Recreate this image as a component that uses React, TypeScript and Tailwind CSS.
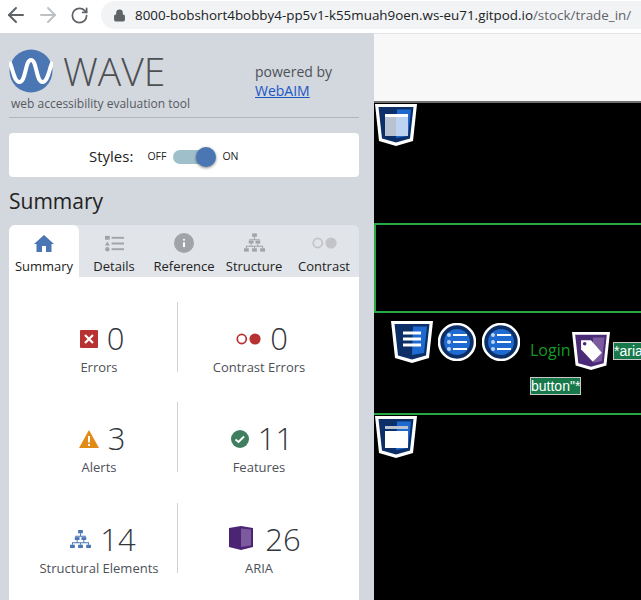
import { ReactNode } from 'react'
import { ArrowLeft, ArrowRight, RotateCw, Lock, Info } from 'lucide-react'

function TreeIcon({ color, className }: { color: string; className?: string }) {
  return (
    <svg viewBox="0 0 22 20" className={className} fill={color}>
      <rect x="8.500" y="0" width="5" height="3.500" />
      <rect x="5" y="7.500" width="5" height="3" />
      <rect x="12" y="7.500" width="5" height="3" />
      <rect x="0" y="15.500" width="5" height="3.500" />
      <rect x="8.500" y="15.500" width="5" height="3.500" />
      <rect x="17" y="15.500" width="5" height="3.500" />
      <path d="M10.500 3.500h1V6h5v1.500h-1V7H6.500v.5h-1V6h5zM7 10.500h1V13h6v-2.500h1V13h5v2.500h-1V14h-7.500v1.500h-1V14H3v1.500H2V13h5z" />
    </svg>
  )
}

function ContrastIcon({ color, className }: { color: string; className?: string }) {
  return (
    <svg viewBox="0 0 26 12" className={className}>
      <circle cx="6" cy="6" r="4.700" fill="none" stroke={color} strokeWidth="1.800" />
      <circle cx="19.800" cy="6" r="5.800" fill={color} />
    </svg>
  )
}

function Shield({ children, light = false, className }: { children: ReactNode; light?: boolean; className?: string }) {
  return (
    <svg viewBox="0 0 42 42" className={className}>
      <path d="M0 0H42L38 37L21 42L4 37Z" fill="#fff" />
      <path d="M3.500 3H38.500L35 34.500L21 38.500L7 34.500Z" fill={light ? '#4b2a78' : '#0b2f66'} />
      {children}
    </svg>
  )
}

function Tab({ icon, label, active = false }: { icon: ReactNode; label: string; active?: boolean }) {
  return (
    <div className={`w-[70px] h-[52px] flex flex-col items-center pt-[6px] ${active ? 'bg-white rounded-t-md' : ''}`}>
      <div className="h-[24px] flex items-center justify-center">{icon}</div>
      <span className="text-[13px] leading-[18px] mt-[2px] text-[#222] whitespace-nowrap">{label}</span>
    </div>
  )
}

function Stat({ icon, value, label, gap = 'gap-[9px]', shift = 'ml-[6px]' }: { icon: ReactNode; value: string; label: string; gap?: string; shift?: string }) {
  return (
    <div className="flex flex-col items-center h-[74px]">
      <div className={`h-[37px] flex items-center ${gap} ${shift}`}>
        {icon}
        <span className="text-[31px] leading-[37px] font-light text-[#33373d]">{value}</span>
      </div>
      <span className="text-[13px] leading-[18px] mt-[1px] text-[#4d5158] whitespace-nowrap">{label}</span>
    </div>
  )
}

function Row({ left, right, top }: { left: ReactNode; right: ReactNode; top: string }) {
  return (
    <div className={`grid grid-cols-[169px_1fr] grid-rows-[70px] ${top}`}>
      <div className="border-r border-[#cfd1d4] flex justify-center pl-[12px] pt-[18px]">{left}</div>
      <div className="flex justify-center pr-[19px] pt-[18px]">{right}</div>
    </div>
  )
}

export default function App() {
  return (
    <div className="w-[641px] h-[600px] overflow-hidden bg-white flex flex-col font-['Open_Sans',sans-serif]">
      {/* Barra del navegador */}
      <div className="h-[33px] shrink-0 flex items-center pb-[3px] bg-white">
        <ArrowLeft size={24} strokeWidth={2} className="ml-[4px] text-[#5f6368]" />
        <ArrowRight size={24} strokeWidth={2} className="ml-[8px] text-[#bdc1c6]" />
        <RotateCw size={19} strokeWidth={2.200} className="ml-[10px] text-[#5f6368]" />
        <div className="ml-[12px] flex-1 h-[28px] bg-[#f1f3f4] rounded-l-full flex items-center pl-[12px] overflow-hidden">
          <Lock size={13} fill="#5f6368" className="text-[#5f6368] shrink-0" />
          <span className="ml-[9px] text-[13.400px] whitespace-nowrap text-[#5f6368]">
            <span className="text-[#202124]">8000-bobshort4bobby4-pp5v1-k55muah9oen.ws-eu71.gitpod.io</span>/stock/trade_in/
          </span>
        </div>
      </div>

      <div className="flex-1 flex min-h-0">
        {/* Panel WAVE */}
        <div className="w-[374px] shrink-0 bg-[#d3d7de] pl-[9px] pr-[15px]">
          <div className="h-[85px] border-b border-[#b3b6bc] flex">
            <div className="w-[246px] pt-[16px]">
              <div className="flex items-center h-[43px]">
                <svg viewBox="0 0 44 44" className="w-[44px] h-[44px] shrink-0">
                  <circle cx="22" cy="22" r="21.500" fill="#4a77b4" />
                  <path d="M0.500 13C4 20 5 33 10.500 33C17 33 16 11 22 11C28 11 27 33 33.500 33C39 33 40 20 43.500 13" fill="none" stroke="#fff" strokeWidth="4" />
                </svg>
                <span className="ml-[10px] text-[39px] leading-[43px] font-light text-[#4d4f52]">WAVE</span>
              </div>
              <div className="ml-[2px] mt-[3px] text-[12px] leading-[17px] text-[#555a60] whitespace-nowrap">web accessibility evaluation tool</div>
            </div>
            <div className="pt-[29px] text-[14px] leading-[19px] text-[#4d5158]">
              <div>powered by</div>
              <div className="text-[#1a56c4] underline">WebAIM</div>
            </div>
          </div>

          <div className="mt-[15px] h-[44px] bg-white rounded-[4px] flex items-center pl-[80px] pt-[3px] text-[#222]">
            <span className="text-[15px]">Styles:</span>
            <span className="ml-[14px] text-[10.500px]">OFF</span>
            <div className="ml-[7px] relative w-[36px] h-[14px] rounded-full bg-[#9fc0cb]">
              <div className="absolute right-[-7px] top-[-3px] w-[20px] h-[20px] rounded-full bg-[#4a77b4] shadow-[0_1px_3px_rgba(0,0,0,0.500)]" />
            </div>
            <span className="ml-[13px] text-[10.500px]">ON</span>
          </div>

          <h2 className="mt-[11px] text-[21px] leading-[27px] text-[#222]">Summary</h2>

          <div className="mt-[10px] w-[350px]">
            <div className="flex bg-[#e1e4e8] rounded-t-md">
              <Tab active label="Summary" icon={
                <svg viewBox="0 0 20 17" className="w-[20px] h-[17px]" fill="#4a77b4">
                  <path d="M10 0L20 9H17.500V17H12V11H8V17H2.500V9H0Z" />
                </svg>
              } />
              <Tab label="Details" icon={
                <svg viewBox="0 0 20 17" className="w-[19px] h-[17px]" fill="#a0a3a7">
                  <rect x="0" y="0.500" width="5" height="4" /><rect x="7" y="1.500" width="13" height="2" />
                  <path d="M2.500 6.500L5 10.500H0Z" /><rect x="7" y="7.500" width="13" height="2" />
                  <circle cx="2.500" cy="14.500" r="2.300" /><rect x="7" y="13.500" width="13" height="2" />
                </svg>
              } />
              <Tab label="Reference" icon={<div className="w-[20px] h-[20px] rounded-full bg-[#a0a3a7] flex items-center justify-center"><Info size={22} strokeWidth={2.400} className="text-white [&>circle]:hidden" /></div>} />
              <Tab label="Structure" icon={<TreeIcon color="#a0a3a7" className="w-[21px] h-[20px]" />} />
              <Tab label="Contrast" icon={<ContrastIcon color="#c2c4c7" className="w-[25px] h-[12px]" />} />
            </div>
            <div className="bg-white h-[323px] pt-[25px]">
              <Row top="" left={<Stat value="0" label="Errors" icon={
                <div className="w-[18px] h-[18px] rounded-[1px] bg-[#b83232] flex items-center justify-center">
                  <svg viewBox="0 0 10 10" className="w-[10px] h-[10px]"><path d="M1 1L9 9M9 1L1 9" stroke="#fff" strokeWidth="2.200" /></svg>
                </div>
              } />} right={<Stat value="0" label="Contrast Errors" icon={<ContrastIcon color="#b83232" className="w-[25px] h-[12px]" />} />} />
              <Row top="mt-[30px]" left={<Stat value="3" label="Alerts" icon={
                <svg viewBox="0 0 20 18" className="w-[20px] h-[18px]"><path d="M10 0L20 18H0Z" fill="#e28a14" /><path d="M10 6v6.500M10 14v2" stroke="#fff" strokeWidth="2" /></svg>
              } />} right={<Stat value="11" label="Features" icon={
                <svg viewBox="0 0 18 18" className="w-[18px] h-[18px]"><circle cx="9" cy="9" r="9" fill="#3f7f60" /><path d="M4.500 9.500L7.500 12L13 6.500" fill="none" stroke="#fff" strokeWidth="2" /></svg>
              } />} />
              <Row top="mt-[31px]" left={<Stat value="14" label="Structural Elements" shift="ml-[8px]" icon={<TreeIcon color="#4a77b4" className="w-[21px] h-[19px]" />} />} right={<Stat value="26" label="ARIA" gap="gap-[12px]" shift="ml-[12px]" icon={
                <svg viewBox="0 0 24 24" className="w-[24px] h-[24px] -mt-[3px]">
                  <path d="M0 2L12 0V24L0 21Z" fill="#4b2474" /><path d="M12 0L24 2V21L12 24Z" fill="#4b2474" />
                  <path d="M12 2.500L22 3.500V19.500L12 21Z" fill="#7b5a9e" />
                </svg>
              } />} />
            </div>
          </div>
        </div>

        {/* Página analizada */}
        <div className="flex-1 min-w-0 flex flex-col overflow-hidden">
          <div className="h-[70px] shrink-0 bg-[#f8f8f8] border-t border-t-[#e4e4e4] border-b-2 border-b-[#6f6f6f]" />
          <div className="flex-1 bg-black flex flex-col">
            <div className="h-[120px] shrink-0 pt-[1px] pl-[1px]">
              <Shield className="w-[42px] h-[42px]">
                <path d="M22 5.500H36L33 32L21 34Z" fill="#1f6ad0" />
                <rect x="10" y="12" width="12" height="20" fill="#b8c2d0" />
                <rect x="21" y="12" width="12" height="20" fill="#bcd3f2" />
                <rect x="10" y="10" width="23" height="3" fill="#fff" />
              </Shield>
            </div>
            <div className="h-[86px] shrink-0 border-2 border-r-0 border-[#28a745] box-content" />
            <div className="h-[100px] shrink-0 pl-[17px] pt-[8px] flex items-start">
              <Shield className="w-[42px] h-[42px] shrink-0">
                <path d="M22 5.500H36L33 32L21 34Z" fill="#1f6ad0" />
                <path d="M12 12H30M12 18H30M12 24H30" stroke="#fff" strokeWidth="2.800" />
              </Shield>
              {[0, 1].map(i => (
                <svg key={i} viewBox="0 0 38 38" className={`w-[38px] h-[38px] mt-[2px] shrink-0 ${i === 0 ? 'ml-[5px]' : 'ml-[6px]'}`}>
                  <circle cx="19" cy="19" r="18" fill="#0b2f66" stroke="#fff" strokeWidth="2.500" />
                  <circle cx="19" cy="19" r="13" fill="#1f6ad0" />
                  <circle cx="11" cy="12" r="2" fill="#bcd3f2" /><circle cx="11" cy="19" r="2" fill="#bcd3f2" /><circle cx="11" cy="26" r="2" fill="#bcd3f2" />
                  <path d="M15 12H29M15 19H29M15 26H29" stroke="#fff" strokeWidth="2.200" />
                </svg>
              ))}
              <div className="ml-[10px] flex-1 min-w-0 pt-[10px] font-['Liberation_Sans',sans-serif] text-[14px] overflow-hidden">
                <div className="flex items-center h-[40px] whitespace-nowrap">
                  <span className="w-[39px] -mt-[2px] text-[16px] text-[#149a26] font-['Open_Sans',sans-serif]">Login</span>
                  <Shield light className="w-[38px] h-[38px] ml-[3px] shrink-0">
                    <path d="M23 6H36L33 32L24 34Z" fill="#7b5a9e" />
                    <path d="M10 9H21L33 23L23 33L10 19Z" fill="#fff" /><circle cx="14" cy="13" r="2" fill="#4b2a78" />
                  </Shield>
                  <span className="ml-[3px] h-[18px] bg-[#17794a] border border-[#c8c8c8] text-white leading-[16px]">*aria-label="</span>
                </div>
                <div className="mt-[6px]">
                  <span className="bg-[#17794a] border border-[#c8c8c8] text-white leading-[16px] inline-block h-[18px] align-top">button"*</span>
                </div>
              </div>
            </div>
            <div className="flex-1 border-t-2 border-[#28a745] pl-[1px] pt-[1px]">
              <Shield className="w-[42px] h-[42px]">
                <path d="M22 5.500H36L33 32L21 34Z" fill="#1f6ad0" />
                <rect x="10" y="10" width="23" height="3" fill="#b8c2d0" />
                <rect x="10" y="15" width="23" height="17" fill="#fff" />
              </Shield>
            </div>
          </div>
        </div>
      </div>
    </div>
  )
}
